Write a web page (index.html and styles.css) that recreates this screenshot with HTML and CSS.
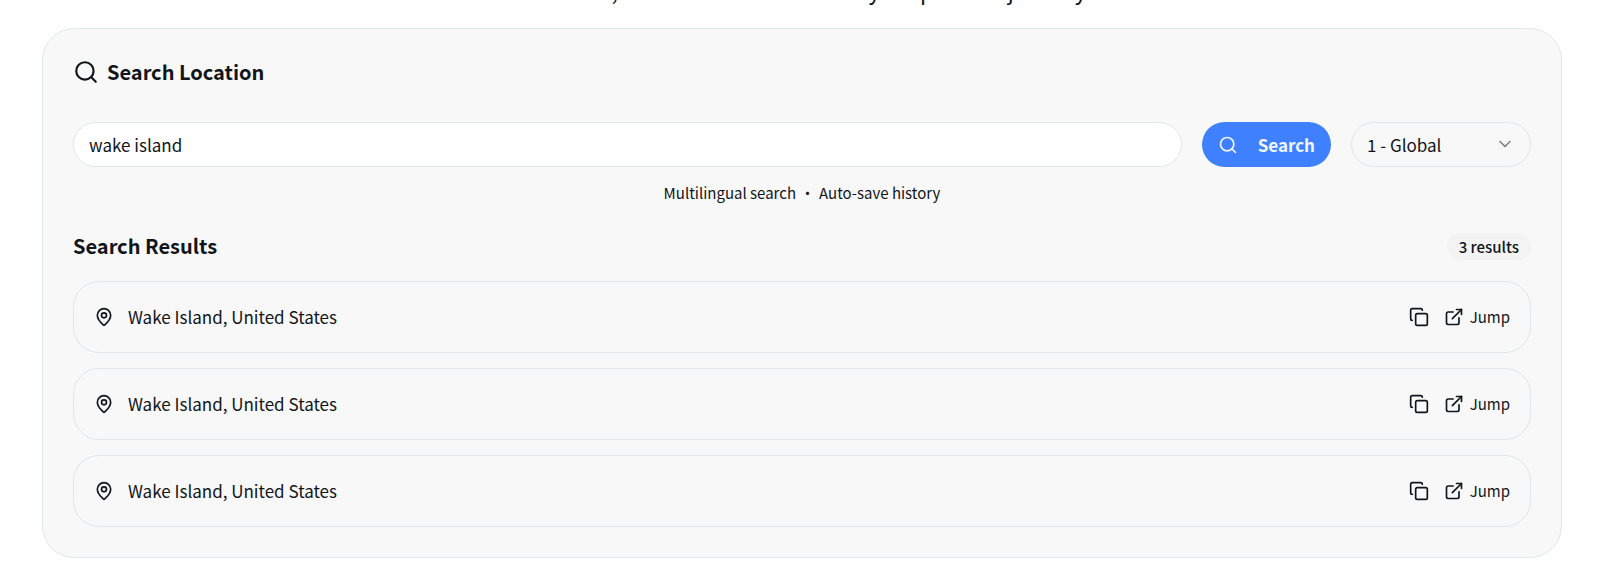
FILE: index.html
```html
<!DOCTYPE html>
<html lang="en">
<head>
  <meta charset="UTF-8" />
  <meta name="viewport" content="width=device-width, initial-scale=1.0"/>
  <title>Search Location</title>
  <link rel="stylesheet" href="styles.css">
</head>
<body>
  <!-- Shared icons -->
  <svg class="icon-defs" aria-hidden="true">
    <symbol id="icon-search" viewBox="0 0 24 24">
      <circle cx="11" cy="11" r="8"/>
      <path d="m21 21-4.3-4.3"/>
    </symbol>
    <symbol id="icon-chevron" viewBox="0 0 24 24">
      <path d="m6 9 6 6 6-6"/>
    </symbol>
    <symbol id="icon-pin" viewBox="0 0 24 24">
      <path d="M20 10c0 4.993-5.539 10.193-7.399 11.799a1 1 0 0 1-1.202 0C9.539 20.193 4 14.993 4 10a8 8 0 0 1 16 0"/>
      <circle cx="12" cy="10" r="3"/>
    </symbol>
    <symbol id="icon-copy" viewBox="0 0 24 24">
      <rect x="8" y="8" width="14" height="14" rx="2"/>
      <path d="M4 16c-1.1 0-2-.9-2-2V4c0-1.1.9-2 2-2h10c1.1 0 2 .9 2 2"/>
    </symbol>
    <symbol id="icon-external" viewBox="0 0 24 24">
      <path d="M15 3h6v6"/>
      <path d="M10 14 21 3"/>
      <path d="M18 13v6a2 2 0 0 1-2 2H5a2 2 0 0 1-2-2V8a2 2 0 0 1 2-2h6"/>
    </symbol>
  </svg>

  <main>
    <p class="intro">resources, and useful tools to start your pixel art journey.</p>

    <section class="search-card">
      <h2 class="card-title">
        <svg class="icon icon-lg"><use href="#icon-search"/></svg>
        Search Location
      </h2>

      <form class="search-form">
        <input type="text" class="search-input" aria-label="Location" value="wake island" />
        <button type="submit" class="search-btn">
          <svg class="icon"><use href="#icon-search"/></svg>
          Search
        </button>
        <div class="select-wrap">
          <select class="region-select" aria-label="Region">
            <option>1 - Global</option>
          </select>
          <svg class="icon select-arrow"><use href="#icon-chevron"/></svg>
        </div>
      </form>
      <p class="hint"><span>Multilingual search</span><span>•</span><span>Auto-save history</span></p>

      <div class="results-header">
        <h3>Search Results</h3>
        <span class="badge">3 results</span>
      </div>

      <ul class="results">
        <li class="result">
          <svg class="icon"><use href="#icon-pin"/></svg>
          <span class="result-name">Wake Island, United States</span>
          <button type="button" class="copy-btn" aria-label="Copy"><svg class="icon"><use href="#icon-copy"/></svg></button>
          <a href="#" class="jump-link"><svg class="icon"><use href="#icon-external"/></svg>Jump</a>
        </li>
        <li class="result">
          <svg class="icon"><use href="#icon-pin"/></svg>
          <span class="result-name">Wake Island, United States</span>
          <button type="button" class="copy-btn" aria-label="Copy"><svg class="icon"><use href="#icon-copy"/></svg></button>
          <a href="#" class="jump-link"><svg class="icon"><use href="#icon-external"/></svg>Jump</a>
        </li>
        <li class="result">
          <svg class="icon"><use href="#icon-pin"/></svg>
          <span class="result-name">Wake Island, United States</span>
          <button type="button" class="copy-btn" aria-label="Copy"><svg class="icon"><use href="#icon-copy"/></svg></button>
          <a href="#" class="jump-link"><svg class="icon"><use href="#icon-external"/></svg>Jump</a>
        </li>
      </ul>
    </section>
  </main>
</body>
</html>
```

FILE: styles.css
```css
* {
  box-sizing: border-box;
}
body {
  font-family: "Noto Sans CJK SC", sans-serif;
  font-size: 17px;
  line-height: 28px;
  color: #11151a;
  background-color: #fff;
  margin: 0;
  padding: 0 48px 24px 42px;
}
h2, h3, p, ul {
  margin: 0;
  padding: 0;
}
input, button, select {
  font: inherit;
  color: inherit;
}
.icon-defs {
  display: none;
}
.icon {
  flex: none;
  width: 20px;
  height: 20px;
  fill: none;
  stroke: currentColor;
  stroke-width: 2;
  stroke-linecap: round;
  stroke-linejoin: round;
}
.icon-lg {
  width: 26px;
  height: 26px;
}
.intro {
  font-size: 22px;
  text-align: center;
  margin-top: -24px;
  margin-bottom: 24px;
}
.search-card {
  background-color: #f8f8f8;
  border: 1px solid #e0e7eb;
  border-radius: 32px;
  padding: 30px;
}
.card-title {
  display: flex;
  align-items: center;
  gap: 8px;
  font-size: 20px;
  line-height: 26px;
  font-weight: 600;
  margin-bottom: 37px;
}
.search-form {
  display: flex;
  gap: 20px;
}
.search-input {
  flex: 1;
  min-width: 0;
  height: 45px;
  padding: 0 15px;
  background-color: #fff;
  border: 1px solid #e0e7eb;
  border-radius: 23px;
}
.search-btn {
  display: flex;
  align-items: center;
  gap: 20px;
  height: 45px;
  padding: 0 16px;
  font-weight: 600;
  color: #eff6ff;
  background-color: #3f80ff;
  border: none;
  border-radius: 23px;
  cursor: pointer;
}
.select-wrap {
  position: relative;
  width: 180px;
}
.region-select {
  width: 100%;
  height: 45px;
  padding: 0 15px;
  appearance: none;
  background-color: transparent;
  border: 1px solid #e0e7eb;
  border-radius: 23px;
}
.select-arrow {
  position: absolute;
  top: 12px;
  right: 16px;
  color: #808285;
  pointer-events: none;
}
.hint {
  display: flex;
  justify-content: center;
  gap: 4px;
  font-size: 15px;
  line-height: 24px;
  margin-top: 14px;
}
.results-header {
  display: flex;
  justify-content: space-between;
  align-items: center;
  margin: 27px 0 21px;
}
.results-header h3 {
  font-size: 20px;
  font-weight: 600;
}
.badge {
  padding: 2px 12px;
  font-size: 15px;
  line-height: 23px;
  font-weight: 500;
  background-color: #f3f3f4;
  border-radius: 14px;
}
.results {
  display: flex;
  flex-direction: column;
  gap: 15px;
  list-style: none;
}
.result {
  display: flex;
  align-items: center;
  height: 72px;
  padding: 0 20px;
  border: 1px solid #e0e7eb;
  border-radius: 26px;
}
.result-name {
  flex: 1;
  margin-left: 14px;
}
.copy-btn {
  display: flex;
  padding: 0;
  background: none;
  border: none;
  cursor: pointer;
}
.jump-link {
  display: flex;
  align-items: center;
  gap: 6px;
  margin-left: 15px;
  font-size: 15px;
  color: inherit;
  text-decoration: none;
}
```
